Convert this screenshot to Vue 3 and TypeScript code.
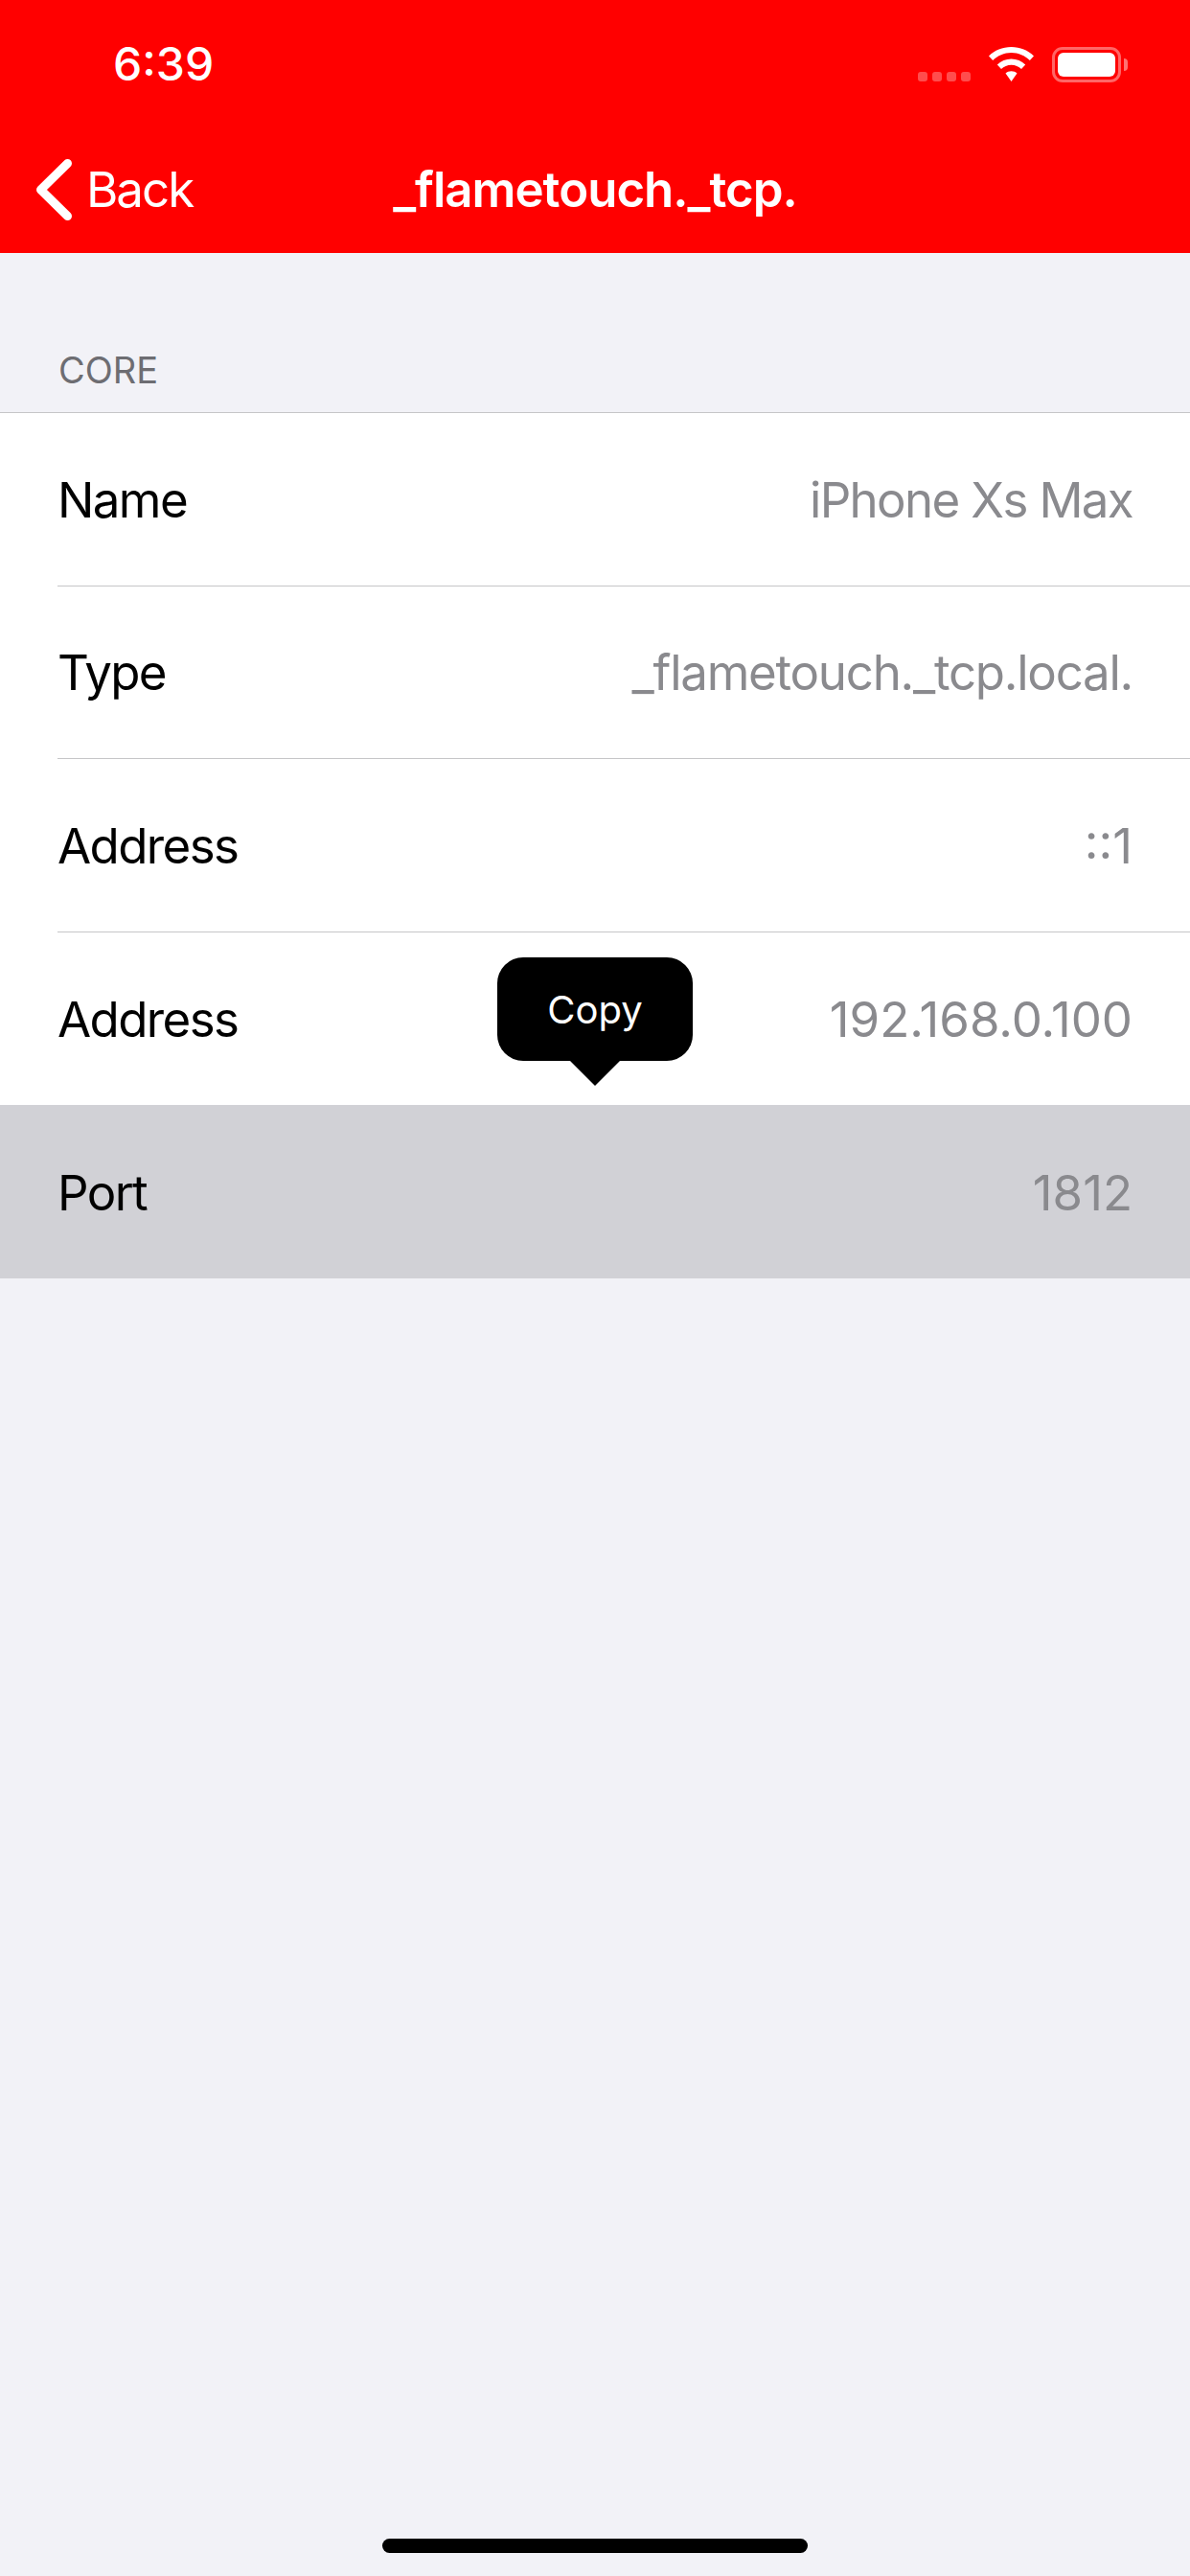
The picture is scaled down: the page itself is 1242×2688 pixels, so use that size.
<script setup lang="ts">
interface Row { label: string; value: string; numeric?: boolean; tight?: boolean; selected?: boolean }
const rows: Row[] = [
  { label: 'Name', value: 'iPhone Xs Max', tight: true },
  { label: 'Type', value: '_flametouch._tcp.local.' },
  { label: 'Address', value: '::1', numeric: true },
  { label: 'Address', value: '192.168.0.100', numeric: true },
  { label: 'Port', value: '1812', numeric: true, selected: true },
]
</script>

<template>
  <div class="screen">
    <header class="header">
      <div class="status">
        <span class="time">6:39</span>
        <div class="status-icons">
          <div class="dots"><i></i><i></i><i></i><i></i></div>
          <svg class="wifi" width="47" height="36" viewBox="0 0 47 36">
            <path d="M0 9.5C6 3.5 14.300 0 23.500 0S41 3.500 47 9.500L42.800 14C37.800 9 31 6 23.500 6S9.200 9 4.200 14Z" fill="#fff"/>
            <path d="M8.800 18.500C12.700 14.700 17.800 12.500 23.500 12.500S34.300 14.700 38.200 18.500L34 23C31.200 20.300 27.600 18.700 23.500 18.700S15.800 20.300 13 23Z" fill="#fff"/>
            <path d="M17.500 27.500C19.100 26 21.200 25.200 23.500 25.200S27.900 26 29.500 27.500L23.500 36Z" fill="#fff"/>
          </svg>
          <div class="battery">
            <div class="battery-body"><div class="battery-fill"></div></div>
            <div class="battery-cap"></div>
          </div>
        </div>
      </div>
      <nav class="nav">
        <div class="back">
          <svg width="37" height="64" viewBox="0 0 37 64">
            <path d="M32.500 4.500L4.500 32L32.500 59.500" fill="none" stroke="#fff" stroke-width="9" stroke-linecap="round" stroke-linejoin="round"/>
          </svg>
          <span class="back-label">Back</span>
        </div>
        <h1 class="title">_flametouch._tcp.</h1>
      </nav>
    </header>

    <main class="content">
      <div class="section-title">CORE</div>
      <div class="list">
        <div v-for="(row, i) in rows" :key="i" class="row" :class="{ selected: row.selected }">
          <div class="row-inner">
            <span class="label">{{ row.label }}</span>
            <span class="value" :class="{ numeric: row.numeric, tight: row.tight }">{{ row.value }}</span>
          </div>
        </div>
        <div class="tooltip">
          <span>Copy</span>
          <svg class="arrow" width="54" height="27" viewBox="0 0 54 27"><path d="M0 0H54L27 27Z" fill="#000"/></svg>
        </div>
      </div>
    </main>

    <div class="home-wrap"><div class="home"></div></div>
  </div>
</template>

<style>
html, body { margin: 0; padding: 0; background: #f2f2f7; }
</style>

<style scoped>
.screen {
  width: 1242px;
  height: 2688px;
  display: flex;
  flex-direction: column;
  background: #f2f2f7;
  font-family: Inter, "Liberation Sans", sans-serif;
  overflow: hidden;
}
.header { background: #ff0000; color: #fff; height: 264px; flex: none; }
.status {
  height: 132px;
  display: flex;
  justify-content: space-between;
  align-items: flex-start;
  padding: 0 65px 0 118px;
  box-sizing: border-box;
}
.time { font-size: 48px; font-weight: 500; line-height: 58px; margin-top: 38px; }
.status-icons { display: flex; align-items: flex-start; margin-top: 49px; }
.dots { display: flex; gap: 5px; margin-top: 26px; margin-right: 19px; }
.dots i { width: 10px; height: 10px; border-radius: 3px; background: rgba(255,255,255,.3); display: block; }
.wifi { display: block; margin-right: 19px; }
.battery { display: flex; align-items: center; }
.battery-body {
  width: 72px; height: 37px; box-sizing: border-box;
  border: 3px solid rgba(255,255,255,.4);
  border-radius: 11px;
  padding: 3px;
}
.battery-fill { width: 100%; height: 100%; background: #fff; border-radius: 6px; }
.battery-cap { width: 4px; height: 13px; margin-left: 3px; background: rgba(255,255,255,.45); border-radius: 0 4px 4px 0; }
.nav { height: 132px; display: flex; align-items: center; position: relative; padding-left: 38px; }
.back { display: flex; align-items: center; gap: 15px; }
.back svg { display: block; }
.back-label { font-size: 51px; line-height: 62px; letter-spacing: -2px; }
.title {
  position: absolute; left: 0; right: 0; top: 0;
  margin: 0; text-align: center;
  font-size: 51px; line-height: 132px; font-weight: 600; letter-spacing: -1px;
}
.content { flex: 1; }
.section-title {
  height: 167px; box-sizing: border-box;
  padding: 99px 0 0 61px;
  font-size: 38px; line-height: 46px;
  color: #6d6d72;
  border-bottom: 1px solid #c6c6c8;
}
.list { position: relative; }
.row { height: 180.5px; background: #fff; padding-left: 60px; }
.row.selected { height: 181px; padding-top: 1px; box-sizing: border-box; }
.row-inner {
  height: 100%; box-sizing: border-box;
  display: flex; justify-content: space-between; align-items: center;
  padding: 1px 60px 0 0;
  border-bottom: 1px solid #c6c6c8;
  font-size: 51px;
}
.row:nth-child(4) .row-inner, .row:nth-child(5) .row-inner { border-bottom: none; }
.row.selected { background: #d1d1d6; }
.label { color: #000; letter-spacing: -1.6px; }
.value { color: #8a8a8e; letter-spacing: -1.25px; }
.value.tight { letter-spacing: -1.65px; }
.value.numeric { letter-spacing: 0; }
.tooltip {
  position: absolute; left: 519px; top: 568px;
  width: 204px; height: 108px;
  background: #000; color: #fff;
  border-radius: 27px;
  display: flex; align-items: center; justify-content: center;
  font-size: 40px;
}
.arrow { position: absolute; left: 75px; top: 107px; display: block; }
.home-wrap { position: absolute; left: 0; right: 0; top: 2649px; display: flex; justify-content: center; }
.home { width: 444px; height: 15px; background: #000; border-radius: 8px; }
</style>
